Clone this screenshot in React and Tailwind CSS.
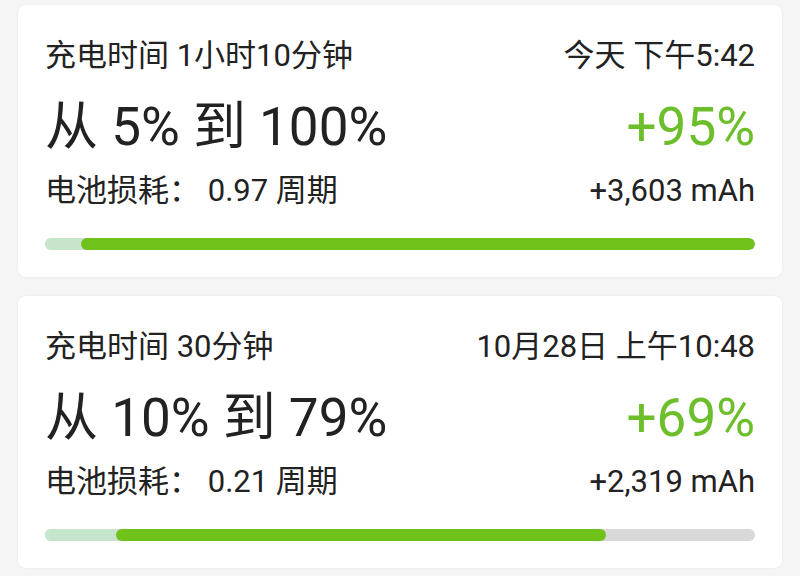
const sessions = [
  {
    duration: "充电时间 1小时10分钟",
    time: "今天 下午5:42",
    from: 5,
    to: 100,
    wear: "0.97",
    capacity: "+3,603 mAh",
  },
  {
    duration: "充电时间 30分钟",
    time: "10月28日 上午10:48",
    from: 10,
    to: 79,
    wear: "0.21",
    capacity: "+2,319 mAh",
  },
];

function ChargeBar({ from, to }) {
  return (
    <div className="relative h-[12px] w-full overflow-hidden rounded-full bg-[#d9d9d9]">
      <div className="absolute inset-y-0 left-0 bg-[#c6e6cc]" style={{ width: `${from}%` }} />
      <div
        className="absolute inset-y-0 rounded-full bg-[#6ec219]"
        style={{ left: `${from}%`, width: `${to - from}%` }}
      />
    </div>
  );
}

function SessionCard({ session }) {
  return (
    <section className="rounded-[8px] bg-white px-[27px] pt-[33px] pb-[27px] shadow-[0_0_3px_rgba(0,0,0,0.06)]">
      <div className="flex h-[36px] items-center justify-between text-[31px] leading-[36px] text-[#222]">
        <span>{session.duration}</span>
        <span>{session.time}</span>
      </div>
      <div className="mt-[23px] flex h-[60px] items-center justify-between leading-[60px]">
        <span className="text-[53px] text-[#222]">
          从 {session.from}% 到 {session.to}%
        </span>
        <span className="text-[53px] text-[#6cbf2a]">+{session.to - session.from}%</span>
      </div>
      <div className="mt-[16px] flex h-[36px] items-center justify-between text-[31px] leading-[36px] text-[#222]">
        <span>电池损耗： {session.wear} 周期</span>
        <span>{session.capacity}</span>
      </div>
      <div className="mt-[29px]">
        <ChargeBar from={session.from} to={session.to} />
      </div>
    </section>
  );
}

export default function App() {
  return (
    <div
      className="h-[576px] w-[800px] overflow-hidden bg-[#f5f5f5] px-[18px] pt-[5px]"
      style={{ fontFamily: 'Roboto, "Noto Sans CJK SC", sans-serif' }}
    >
      <div className="flex flex-col gap-[19px]">
        {sessions.map((s) => (
          <SessionCard key={s.time} session={s} />
        ))}
      </div>
    </div>
  );
}
